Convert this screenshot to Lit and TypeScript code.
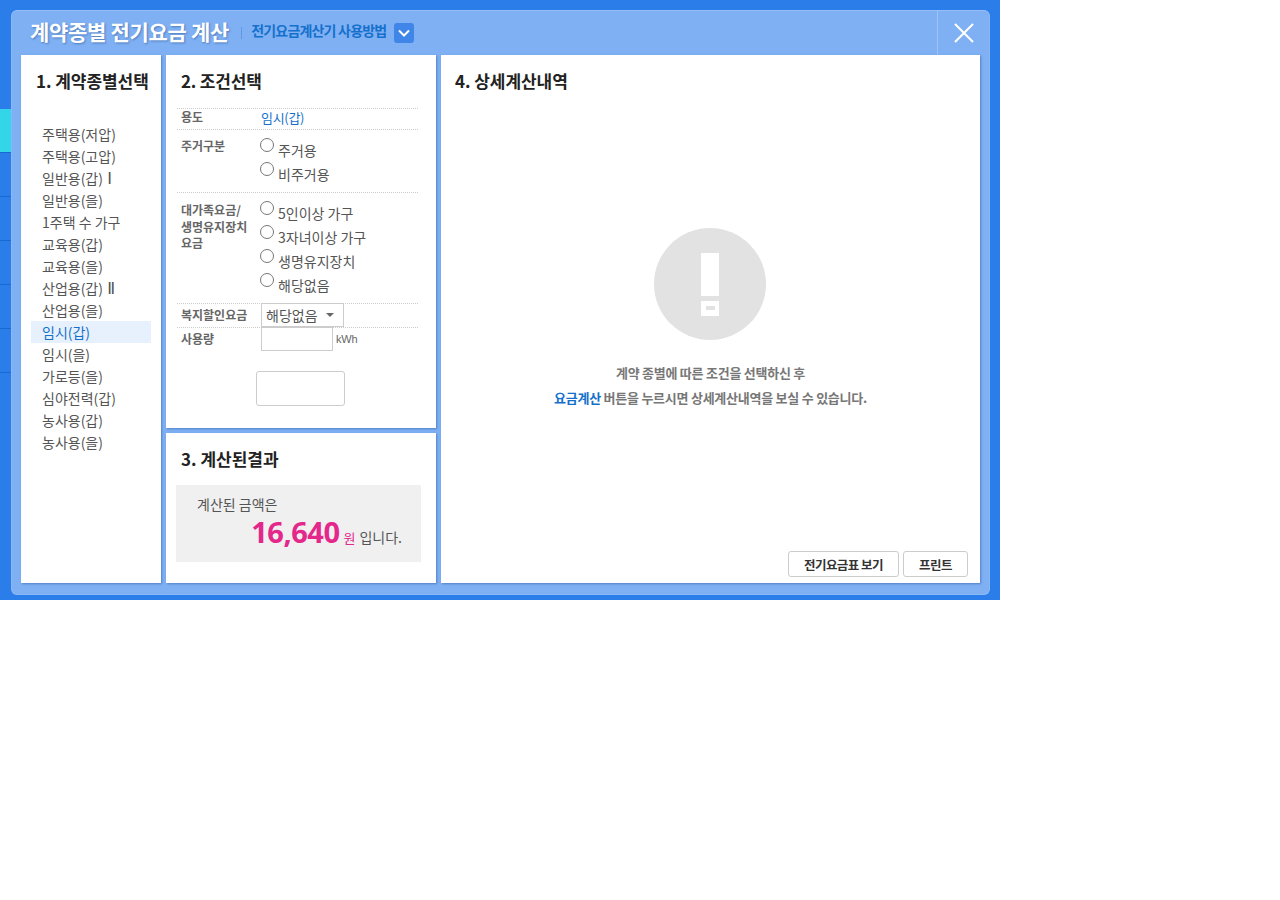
import { LitElement, html, css } from "lit";
import { customElement } from "lit/decorators.js";

const TYPES: [string, string?][] = [["주택용(저압)"],["주택용(고압)"],["일반용(갑) ","Ⅰ"],["일반용(을)"],["1주택 수 가구"],["교육용(갑)"],["교육용(을)"],["산업용(갑) ","Ⅱ"],["산업용(을)"],["임시(갑)"],["임시(을)"],["가로등(을)"],["심야전력(갑)"],["농사용(갑)"],["농사용(을)"]];
const STRIPES = [0, 1, 2, 3, 4, 5];

@customElement("app-root")
export class AppRoot extends LitElement {
  static styles = css`
    :host { display: block; width: 1280px; height: 900px; background: #fff; font-family: "Noto Sans CJK KR", "Noto Sans", sans-serif; color: #444; }
    * { box-sizing: border-box; }
    .page { position: relative; width: 1000px; height: 600px; background: #2b7de9; padding: 10px 10px 5px 11px; }
    .side { position: absolute; left: 0; top: 109px; width: 11px; display: flex; flex-direction: column; }
    .side div { height: 44px; border-bottom: 1px solid #1a69d0; }
    .side .cy { background: #33d6e8; }
    .modal { position: relative; width: 979px; height: 585px; background: #7fb0f4; border-radius: 6px; border: 1px solid #8ab8f5; border-top-color: #95bff6; display: flex; flex-direction: column; }
    .head { height: 44px; display: flex; align-items: center; padding-left: 18px; }
    .title { font-size: 21px; font-weight: 700; color: #fff; letter-spacing: -0.3px; text-shadow: 1px 1px 2px rgba(40,80,140,.55); margin-bottom: 4px; }
    .sep { width: 1px; height: 12px; background: #5f97e0; margin: 0 9px 0 12px; }
    .how { font-size: 14px; font-weight: 700; color: #1570cc; letter-spacing: -0.8px; margin-bottom: 6px; }
    .chev { width: 20px; height: 20px; margin-left: 8px; background: #3f86e8; border-radius: 3px; display: flex; align-items: center; justify-content: center; }
    .close { margin-left: auto; width: 52px; height: 44px; border-left: 1px solid #9cc4f7; display: flex; align-items: center; justify-content: center; }
    .body { display: flex; gap: 5px; padding-left: 9px; height: 528px; }
    .panel { background: #fff; box-shadow: 1px 1px 2px rgba(50,90,160,.55); position: relative; }
    h2 { margin: 0; font-size: 17px; font-weight: 700; color: #222; letter-spacing: -0.05px; line-height: 24px; }
    .p1 { width: 140px; padding: 14px 10px 0; }
    .p1 h2 { padding-left: 5px; white-space: nowrap; }
    .list { list-style: none; margin: 30px 0 0; padding: 0; }
    .list li { height: 22px; line-height: 22px; font-size: 14px; padding-left: 11px; color: #555; white-space: nowrap; }
    .list li.on { background: #e6f1fd; color: #1570cc; }
    .rn { font-family: "DejaVu Sans", sans-serif; font-size: 16px; line-height: 14px; margin-left: 1px; color: #555; }
    .col { width: 270px; display: flex; flex-direction: column; gap: 5px; }
    .p2 { height: 373px; padding: 14px 18px 0 11px; }
    .p2 h2 { padding-left: 4px; margin-bottom: 15px; letter-spacing: -0.2px; }
    .row { display: flex; border-top: 1px dotted #ccc; font-size: 14px; }
    .row:last-of-type { border-bottom: 1px dotted #ccc; }
    .r1 { height: 21px; }
    .r2 { height: 63px; padding-top: 8px; }
    .r3 { height: 111px; padding-top: 8px; }
    .r4, .r5 { height: 24px; }
    .lab { width: 84px; padding-left: 4px; font-size: 12px; font-weight: 700; color: #666; line-height: 16.5px; flex: none; }
    .r3 .lab { padding-top: 1px; }
    .r4 .lab, .r5 .lab { padding-top: 3px; }
    .val { color: #1570cc; font-size: 13px; line-height: 18px; letter-spacing: -0.3px; }
    .radios { display: flex; flex-direction: column; }
    .r { display: flex; align-items: flex-start; height: 24px; color: #555; font-size: 14px; white-space: nowrap; }
    .dot { width: 14px; height: 14px; border: 1px solid #767676; border-radius: 50%; background: #fff; margin: 0 4px 0 -1px; flex: none; }
    .r span + span { margin-top: 2px; line-height: 20px; }
    .sel { width: 83px; height: 24px; border: 1px solid #ccc; display: flex; align-items: center; padding-left: 4px; color: #555; font-size: 14px; gap: 8px; margin-top: -1px; }
    .car { width: 0; height: 0; border-left: 4px solid transparent; border-right: 4px solid transparent; border-top: 4px solid #666; }
    .inp { width: 72px; height: 24px; border: 1px solid #ccc; background: #fff; margin-top: -1px; }
    .unit { font-family: "Liberation Sans", sans-serif; font-size: 11px; color: #666; line-height: 23px; margin-left: 3px; letter-spacing: -0.2px; }
    .calc { width: 89px; height: 35px; border: 1px solid #ccc; border-radius: 3px; background: #fff; margin: 20px 0 0 79px; }
    .p3 { height: 150px; padding: 14px 15px 0 10px; }
    .p3 h2 { padding-left: 5px; letter-spacing: 0; }
    .box { margin-top: 14px; width: 245px; height: 77px; background: #f0f0f0; padding: 9px 0 0 21px; font-size: 14px; color: #555; line-height: 20px; }
    .sum { display: flex; justify-content: flex-end; align-items: baseline; padding-right: 19px; line-height: 34px; margin-top: 1px; white-space: nowrap; }
    .sum b { font-size: 29px; font-weight: 700; color: #e4278a; letter-spacing: -0.5px; font-family: "Noto Sans", sans-serif; }
    .sum i { font-style: normal; color: #e4278a; margin: 0 4px 0 4px; font-size: 13px; }
    .p4 { width: 539px; padding: 14px 14px 0; }
    .empty { position: absolute; left: 0; right: 0; top: 173px; display: flex; flex-direction: column; align-items: center; }
    .empty svg { margin-right: 2px; }
    .msg { margin-top: 20px; text-align: center; font-size: 13px; font-weight: 700; color: #777; line-height: 25px; letter-spacing: -0.25px; }
    .msg em { font-style: normal; color: #1570cc; }
    .btns { position: absolute; right: 12px; bottom: 6px; display: flex; gap: 4px; }
    .btn { height: 26px; border: 1px solid #ccc; border-radius: 3px; background: #fff; font-size: 12.5px; font-weight: 700; color: #333; display: flex; align-items: center; justify-content: center; letter-spacing: -0.55px; }
    .b1 { width: 111px; } .b2 { width: 65px; }
  `;
  render() {
    return html`<div class="page">
      <div class="side">${STRIPES.map(i => html`<div class=${i === 0 ? "cy" : ""}></div>`)}</div>
      <div class="modal">
        <div class="head">
          <span class="title">계약종별 전기요금 계산</span><span class="sep"></span>
          <span class="how">전기요금계산기 사용방법</span>
          <span class="chev"><svg width="12" height="8" viewBox="0 0 12 8"><path d="M1 1.5l5 5 5-5" fill="none" stroke="#fff" stroke-width="2"/></svg></span>
          <span class="close"><svg width="20" height="20" viewBox="0 0 20 20"><path d="M1 1l18 18M19 1L1 19" stroke="#fff" stroke-width="2" fill="none"/></svg></span>
        </div>
        <div class="body">
          <section class="panel p1">
            <h2>1. 계약종별선택</h2>
            <ul class="list">${TYPES.map(([t, n]) => html`<li class=${t === "임시(갑)" ? "on" : ""}>${t}${n ? html`<span class="rn">${n}</span>` : ""}</li>`)}</ul>
          </section>
          <div class="col">
            <section class="panel p2">
              <h2>2. 조건선택</h2>
              <div class="row r1"><div class="lab">용도</div><div class="val">임시(갑)</div></div>
              <div class="row r2"><div class="lab">주거구분</div>${this.radios(["주거용","비주거용"])}</div>
              <div class="row r3"><div class="lab">대가족요금/<br>생명유지장치<br>요금</div>${this.radios(["5인이상 가구","3자녀이상 가구","생명유지장치","해당없음"])}</div>
              <div class="row r4"><div class="lab">복지할인요금</div><div class="sel">해당없음<span class="car"></span></div></div>
              <div class="row r5"><div class="lab">사용량</div><div class="inp"></div><span class="unit">kWh</span></div>
              <div class="calc"></div>
            </section>
            <section class="panel p3">
              <h2>3. 계산된결과</h2>
              <div class="box">계산된 금액은
                <div class="sum"><b>16,640</b><i>원</i>입니다.</div>
              </div>
            </section>
          </div>
          <section class="panel p4">
            <h2>4. 상세계산내역</h2>
            <div class="empty">
              <svg width="112" height="112" viewBox="0 0 112 112"><circle cx="56" cy="56" r="56" fill="#e2e2e2"/><rect x="47" y="25" width="18" height="43" fill="#fff"/><rect x="47" y="73" width="18" height="15" fill="#fff"/><rect x="52" y="78" width="9" height="4" fill="#e2e2e2"/></svg>
              <div class="msg">계약 종별에 따른 조건을 선택하신 후<br><em>요금계산</em> 버튼을 누르시면 상세계산내역을 보실 수 있습니다.</div>
            </div>
            <div class="btns"><div class="btn b1">전기요금표 보기</div><div class="btn b2">프린트</div></div>
          </section>
        </div>
      </div>
    </div>`;
  }
  radios(items: string[]) {
    return html`<div class="radios">${items.map(t => html`<div class="r"><span class="dot"></span><span>${t}</span></div>`)}</div>`;
  }
}
